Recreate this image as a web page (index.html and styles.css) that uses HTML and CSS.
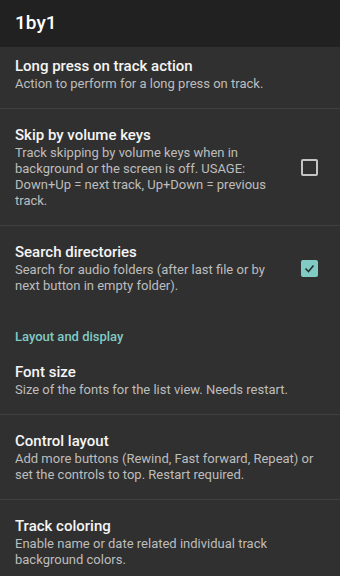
FILE: index.html
```html
<!doctype html>
<html>
<head>
    <meta charset="UTF-8">
    <title>1by1</title>
    <link rel="stylesheet" href="styles.css">
</head>
<body>
<div class="toolbar">
    <span class="toolbar-title">1by1</span>
</div>
<div class="prefs">
    <div class="pref pref-first">
        <div class="pref-text">
            <div class="pref-title">Long press on track action</div>
            <div class="pref-summary">Action to perform for a long press on track.</div>
        </div>
    </div>
    <div class="pref">
        <div class="pref-text">
            <div class="pref-title">Skip by volume keys</div>
            <div class="pref-summary">Track skipping by volume keys when in background or the screen is off. USAGE: Down+Up = next track, Up+Down = previous track.</div>
        </div>
        <span class="check"></span>
    </div>
    <div class="pref pref-last">
        <div class="pref-text">
            <div class="pref-title">Search directories</div>
            <div class="pref-summary">Search for audio folders (after last file or by next button in empty folder).</div>
        </div>
        <span class="check checked">
            <svg width="11" height="9" viewBox="0 0 11 9"><path d="M1.5 4.5l3 3 5-6" fill="none" stroke="#263331" stroke-width="1.6"/></svg>
        </span>
    </div>
    <div class="category">Layout and display</div>
    <div class="pref">
        <div class="pref-text">
            <div class="pref-title">Font size</div>
            <div class="pref-summary">Size of the fonts for the list view. Needs restart.</div>
        </div>
    </div>
    <div class="pref">
        <div class="pref-text">
            <div class="pref-title">Control layout</div>
            <div class="pref-summary">Add more buttons (Rewind, Fast forward, Repeat) or set the controls to top. Restart required.</div>
        </div>
    </div>
    <div class="pref">
        <div class="pref-text">
            <div class="pref-title">Track coloring</div>
            <div class="pref-summary">Enable name or date related individual track background colors.</div>
        </div>
    </div>
</div>
</body>
</html>
```
FILE: styles.css
```css
* {
    margin: 0;
    padding: 0;
    box-sizing: border-box;
}

body {
    background: #303030;
    font-family: Roboto, "Liberation Sans", sans-serif;
    color: #fff;
    overflow: hidden;
}

.toolbar {
    height: 47px;
    background: #212121;
    display: flex;
    align-items: center;
    padding: 0 15px 3px;
}

.toolbar-title {
    font-size: 19px;
    font-weight: 500;
}

.pref {
    display: flex;
    align-items: center;
    padding: 16px 22px 16px 15px;
    border-bottom: 1px solid #404040;
}

.pref-first {
    padding-top: 9px;
}

.pref-last {
    border-bottom: none;
}

.pref-text {
    flex: 1;
}

.pref-title {
    font-size: 15px;
    line-height: 20px;
    font-weight: 500;
    color: #f5f5f5;
}

.pref-summary {
    font-size: 13px;
    line-height: 16px;
    color: #bdbdbd;
}

.check {
    width: 17px;
    height: 17px;
    margin-left: 16px;
    border: 2px solid #c4c4c4;
    border-radius: 2px;
    display: flex;
    align-items: center;
    justify-content: center;
}

.check.checked {
    background: #80cbc4;
    border-color: #80cbc4;
}

.category {
    padding: 19px 15px 1px;
    font-size: 13px;
    line-height: 16px;
    font-weight: 500;
    color: #80cbc4;
}
```
